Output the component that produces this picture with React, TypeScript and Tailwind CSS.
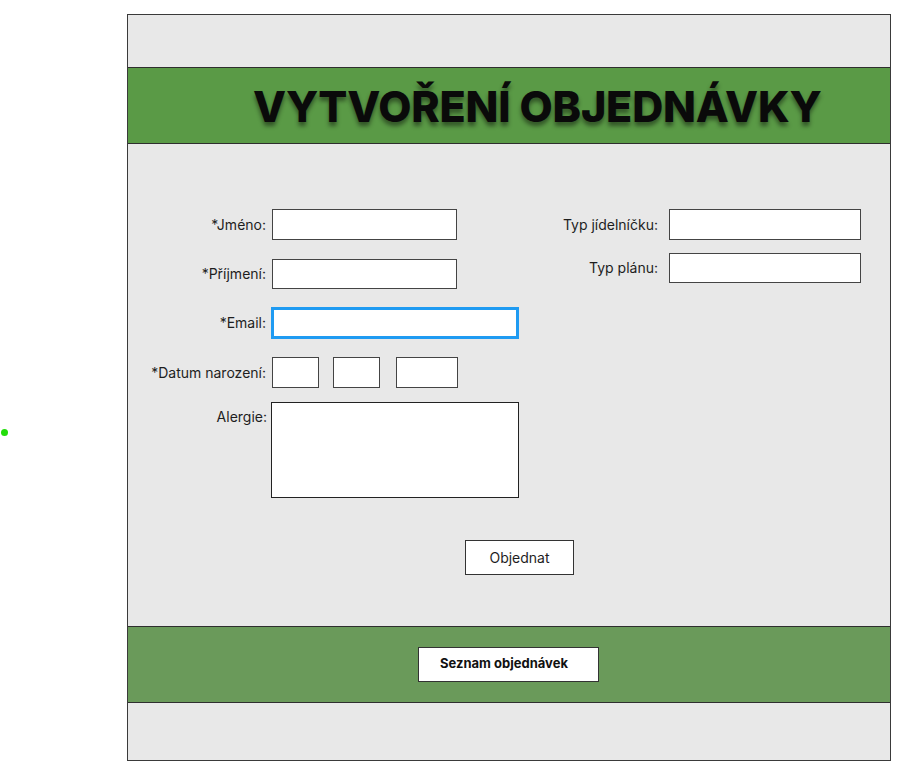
import React from "react";

const font = { fontFamily: "Inter, 'Noto Sans', sans-serif" };

function Label({ children, className = "" }: { children: React.ReactNode; className?: string }) {
  return (
    <span className={"text-[14px] leading-none text-[#1e1e1e] text-right " + className}>{children}</span>
  );
}

export default function App() {
  return (
    <div className="relative min-h-[775px] w-[903px] bg-white" style={font}>
      <div className="absolute left-[1px] top-[429px] h-[7px] w-[7px] rounded-full bg-[#22dd0a]" />
      <div className="ml-[127px] pt-[14px]">
        <div className="flex w-[764px] flex-col border border-[#3a3a3a] bg-[#e8e8e8]">
          <div className="h-[52px]" />
          <div className="flex h-[77px] items-center border-y border-[#2e2e2e] bg-[#5a9a46] pl-[125px]">
            <h1 className="mt-[2px] text-[43px] font-extrabold leading-none tracking-[-0.2px] text-[#0a0a0a] [text-shadow:0_4px_4px_rgba(0,0,0,0.45)]">
              VYTVOŘENÍ OBJEDNÁVKY
            </h1>
          </div>
          <div className="flex h-[482px] flex-col pt-[65px]">
            <div className="flex">
              <div className="flex w-[412px] flex-col">
                <div className="flex items-center">
                  <Label className="w-[138px]">*Jméno:</Label>
                  <div className="ml-[6px] h-[31px] w-[185px] border border-[#444] bg-white" />
                </div>
                <div className="mt-[19px] flex items-center">
                  <Label className="w-[138px]">*Příjmení:</Label>
                  <div className="ml-[6px] h-[30px] w-[185px] border border-[#444] bg-white" />
                </div>
                <div className="mt-[18px] flex items-center">
                  <Label className="w-[138px]">*Email:</Label>
                  <div className="ml-[5px] h-[32px] w-[248px] border-[3px] border-[#1f9bf2] bg-white" />
                </div>
                <div className="mt-[18px] flex items-center">
                  <Label className="w-[138px]">*Datum narození:</Label>
                  <div className="ml-[6px] h-[31px] w-[47px] border border-[#444] bg-white" />
                  <div className="ml-[14px] h-[31px] w-[47px] border border-[#444] bg-white" />
                  <div className="ml-[16px] h-[31px] w-[62px] border border-[#444] bg-white" />
                </div>
                <div className="mt-[14px] flex items-start">
                  <Label className="mt-[8px] w-[139px]">Alergie:</Label>
                  <div className="ml-[4px] h-[96px] w-[248px] border border-[#222] bg-white" />
                </div>
              </div>
              <div className="flex flex-col">
                <div className="flex items-center">
                  <Label className="w-[118px]">Typ jídelníčku:</Label>
                  <div className="ml-[11px] h-[31px] w-[192px] border border-[#444] bg-white" />
                </div>
                <div className="mt-[13px] flex items-center">
                  <Label className="w-[118px]">Typ plánu:</Label>
                  <div className="ml-[11px] h-[30px] w-[192px] border border-[#444] bg-white" />
                </div>
              </div>
            </div>
            <div className="ml-[337px] mt-[42px]">
              <button className="flex h-[35px] w-[109px] items-center justify-center border border-[#333] bg-white text-[14px] text-[#1e1e1e]">
                Objednat
              </button>
            </div>
          </div>
          <div className="flex h-[77px] items-center justify-center border-y border-[#2e2e2e] bg-[#6a9a5a]">
            <button className="mb-[1px] mr-[2px] flex h-[35px] w-[181px] items-center justify-center border border-[#333] bg-white pr-[8px] text-[13px] font-bold text-[#111]">
              Seznam objednávek
            </button>
          </div>
          <div className="h-[57px]" />
        </div>
      </div>
    </div>
  );
}
